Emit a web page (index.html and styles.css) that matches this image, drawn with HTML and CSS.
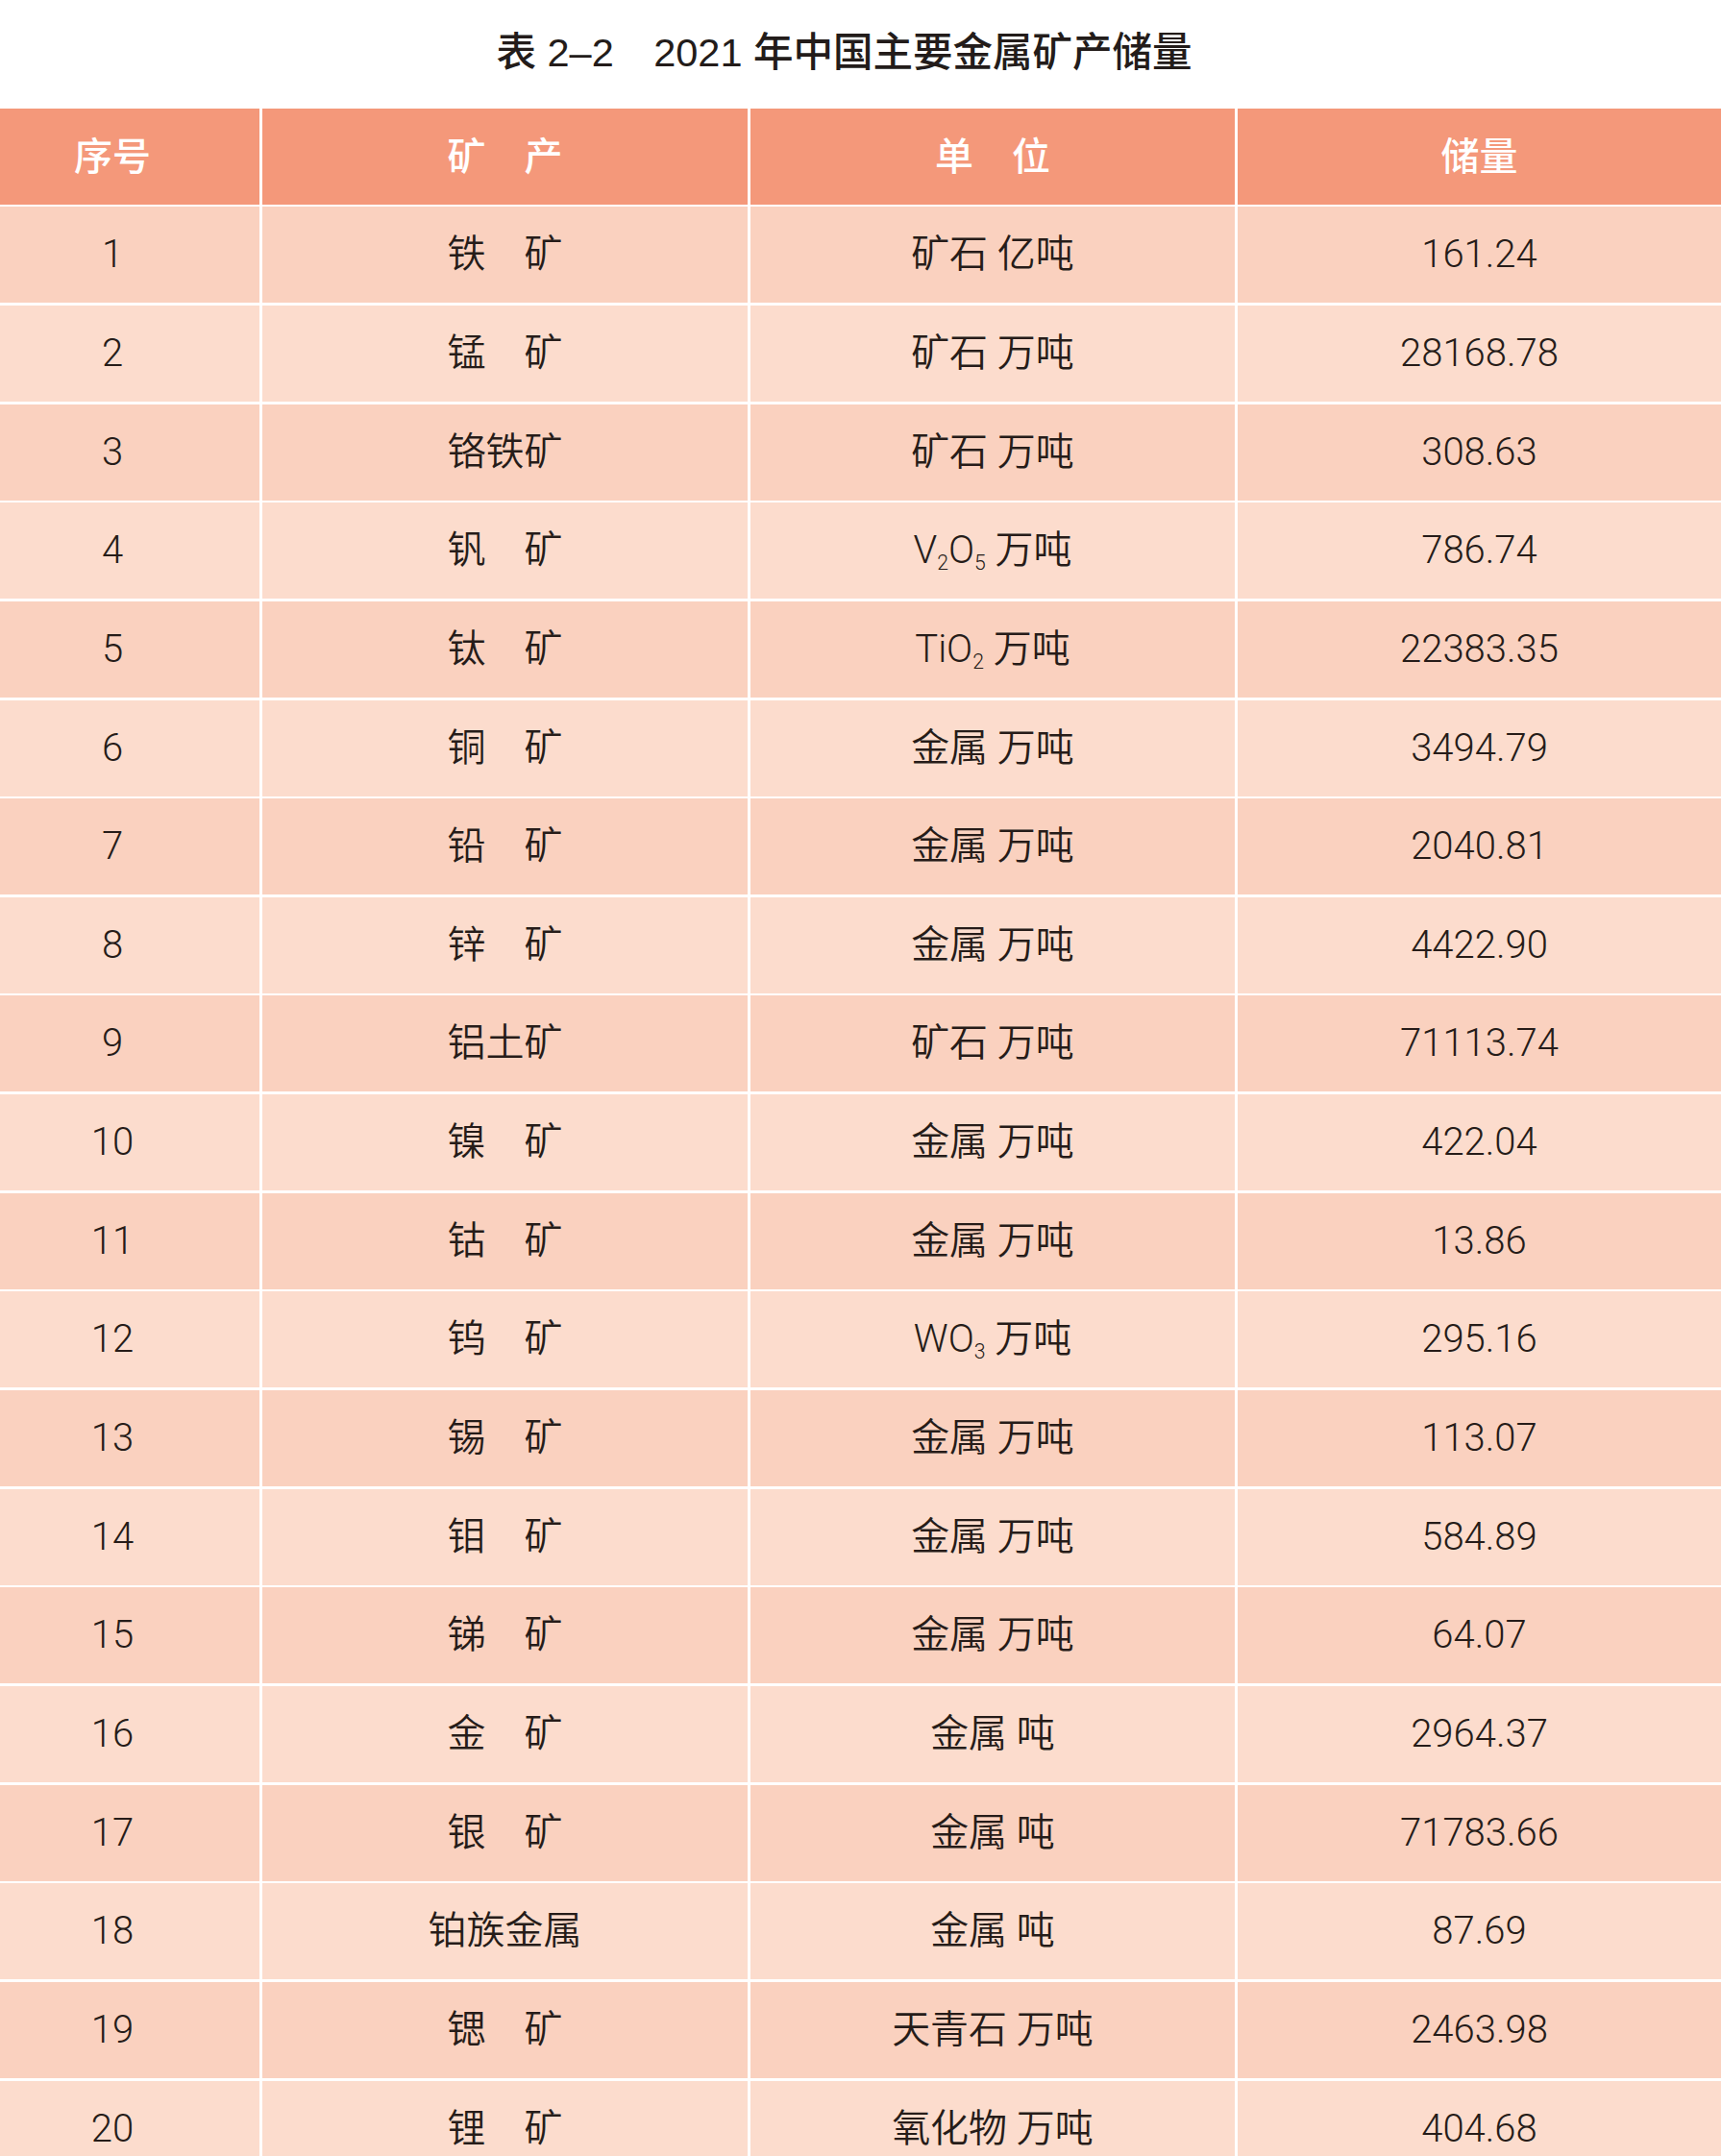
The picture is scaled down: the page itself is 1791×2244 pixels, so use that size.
FILE: index.html
```html
<!DOCTYPE html>
<html lang="zh-CN">
<head>
<meta charset="utf-8">
<title>表 2-2 2021 年中国主要金属矿产储量</title>
<link rel="stylesheet" href="styles.css">
</head>
<body>
<div class="page">
  <h1 class="title">表 2–2　2021 年中国主要金属矿产储量</h1>
  <div class="table">
    <div class="row head">
      <div class="cell c1">序号</div>
      <div class="cell">矿　产</div>
      <div class="cell">单　位</div>
      <div class="cell">储量</div>
    </div>
    <div class="row odd"><div class="cell c1">1</div><div class="cell">铁　矿</div><div class="cell">矿石 亿吨</div><div class="cell">161.24</div></div>
    <div class="row even"><div class="cell c1">2</div><div class="cell">锰　矿</div><div class="cell">矿石 万吨</div><div class="cell">28168.78</div></div>
    <div class="row odd"><div class="cell c1">3</div><div class="cell">铬铁矿</div><div class="cell">矿石 万吨</div><div class="cell">308.63</div></div>
    <div class="row even"><div class="cell c1">4</div><div class="cell">钒　矿</div><div class="cell">V<sub>2</sub>O<sub>5</sub> 万吨</div><div class="cell">786.74</div></div>
    <div class="row odd"><div class="cell c1">5</div><div class="cell">钛　矿</div><div class="cell">TiO<sub>2</sub> 万吨</div><div class="cell">22383.35</div></div>
    <div class="row even"><div class="cell c1">6</div><div class="cell">铜　矿</div><div class="cell">金属 万吨</div><div class="cell">3494.79</div></div>
    <div class="row odd"><div class="cell c1">7</div><div class="cell">铅　矿</div><div class="cell">金属 万吨</div><div class="cell">2040.81</div></div>
    <div class="row even"><div class="cell c1">8</div><div class="cell">锌　矿</div><div class="cell">金属 万吨</div><div class="cell">4422.90</div></div>
    <div class="row odd"><div class="cell c1">9</div><div class="cell">铝土矿</div><div class="cell">矿石 万吨</div><div class="cell">71113.74</div></div>
    <div class="row even"><div class="cell c1">10</div><div class="cell">镍　矿</div><div class="cell">金属 万吨</div><div class="cell">422.04</div></div>
    <div class="row odd"><div class="cell c1">11</div><div class="cell">钴　矿</div><div class="cell">金属 万吨</div><div class="cell">13.86</div></div>
    <div class="row even"><div class="cell c1">12</div><div class="cell">钨　矿</div><div class="cell">WO<sub>3</sub> 万吨</div><div class="cell">295.16</div></div>
    <div class="row odd"><div class="cell c1">13</div><div class="cell">锡　矿</div><div class="cell">金属 万吨</div><div class="cell">113.07</div></div>
    <div class="row even"><div class="cell c1">14</div><div class="cell">钼　矿</div><div class="cell">金属 万吨</div><div class="cell">584.89</div></div>
    <div class="row odd"><div class="cell c1">15</div><div class="cell">锑　矿</div><div class="cell">金属 万吨</div><div class="cell">64.07</div></div>
    <div class="row even"><div class="cell c1">16</div><div class="cell">金　矿</div><div class="cell">金属 吨</div><div class="cell">2964.37</div></div>
    <div class="row odd"><div class="cell c1">17</div><div class="cell">银　矿</div><div class="cell">金属 吨</div><div class="cell">71783.66</div></div>
    <div class="row even"><div class="cell c1">18</div><div class="cell">铂族金属</div><div class="cell">金属 吨</div><div class="cell">87.69</div></div>
    <div class="row odd"><div class="cell c1">19</div><div class="cell">锶　矿</div><div class="cell">天青石 万吨</div><div class="cell">2463.98</div></div>
    <div class="row even"><div class="cell c1">20</div><div class="cell">锂　矿</div><div class="cell">氧化物 万吨</div><div class="cell">404.68</div></div>
  </div>
</div>
</body>
</html>
```

FILE: styles.css
```css
html, body {
  margin: 0;
  padding: 0;
  background: #ffffff;
}

body {
  font-family: "Liberation Sans", "Noto Sans CJK SC", sans-serif;
  color: #2a201d;
}

.page {
  width: 1791px;
}

.title {
  margin: 0;
  height: 112.7px;
  box-sizing: border-box;
  padding: 34px 34px 0 0;
  font-size: 41.5px;
  line-height: 41.5px;
  font-weight: 500;
  text-align: center;
  color: #231c1a;
  white-space: pre;
}

.table {
  display: flex;
  flex-direction: column;
  gap: 2.65px;
  background: #ffffff;
}

.row {
  display: grid;
  grid-template-columns: 270px 505px 504px 1fr;
  column-gap: 3px;
  height: 100px;
}

.cell {
  box-sizing: border-box;
  text-align: center;
  font-family: "Roboto", "Noto Sans CJK SC", sans-serif;
  font-weight: 350;
  font-size: 40px;
  line-height: 100px;
  white-space: pre;
  color: #261c19;
}

.c1 {
  padding-right: 36px;
}

.head .cell {
  background: #f4987a;
  color: #ffffff;
  font-weight: 500;
  padding-top: 2px;
  line-height: 98px;
}

.odd .cell {
  background: #fad1bf;
}

.even .cell {
  background: #fcdccd;
}

.cell sub {
  font-size: 0.53em;
  vertical-align: -7px;
  line-height: 0;
}
```
